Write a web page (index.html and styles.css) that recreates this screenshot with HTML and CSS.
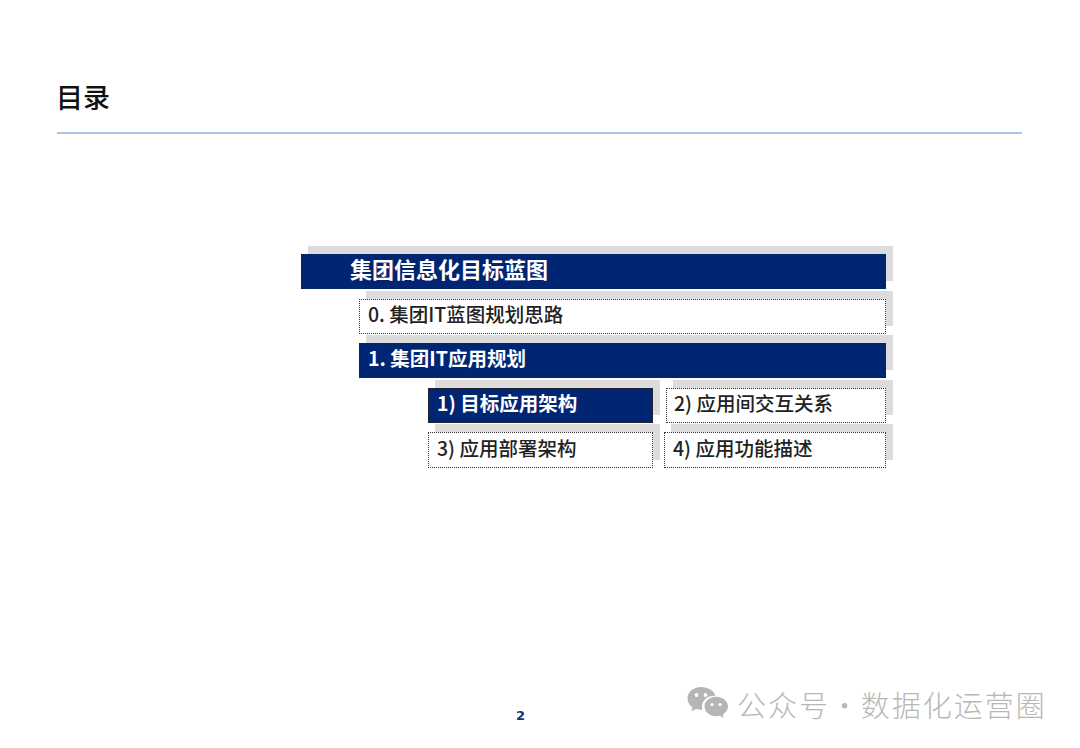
FILE: index.html
```html
<!DOCTYPE html>
<html lang="zh-CN">
<head>
<meta charset="utf-8">
<title>目录</title>
<link rel="stylesheet" href="styles.css">
</head>
<body>
<main class="page">
  <header class="head">
    <h1 class="title">目录</h1>
    <div class="rule"></div>
  </header>
  <section class="menu">
    <div class="item solid lead">集团信息化目标蓝图</div>
    <div class="item outline sub">0. 集团IT蓝图规划思路</div>
    <div class="item solid sub">1. 集团IT应用规划</div>
    <div class="pairs">
      <div class="item solid">1) 目标应用架构</div>
      <div class="item outline nudge">2) 应用间交互关系</div>
      <div class="item outline tall">3) 应用部署架构</div>
      <div class="item outline tall">4) 应用功能描述</div>
    </div>
  </section>
  <footer class="pageno">2</footer>
  <div class="mark">
    <svg class="wechat" viewBox="0 0 42 36" width="42" height="36" aria-hidden="true">
      <path class="bub" d="M14 1C6.500 1 .5 6 .5 12.400c0 3.700 2 6.800 5 8.900L4.300 25.400l4.700-2.400c1.600.4 3.200.7 5 .7.5 0 1 0 1.500-.1-.3-1-.5-2-.5-3.100 0-6 5.600-10.700 12.500-10.700.3 0 .7 0 1 0C27.200 4.900 21.200 1 14 1z"/>
      <circle class="eye" cx="9.500" cy="9" r="1.900"/>
      <circle class="eye" cx="18.500" cy="9" r="1.900"/>
      <path class="bub" d="M41 20.500c0-5.400-5.400-9.700-11.800-9.700-6.500 0-11.700 4.300-11.700 9.700s5.200 9.700 11.700 9.700c1.300 0 2.600-.2 3.800-.5l3.800 2.200-1-3.500c3.200-1.900 5.200-4.600 5.200-7.900z"/>
      <circle class="eye" cx="25" cy="18.500" r="1.600"/>
      <circle class="eye" cx="33" cy="18.500" r="1.600"/>
    </svg>
    <span class="mark-text">公众号 · 数据化运营圈</span>
  </div>
</main>
</body>
</html>
```
FILE: styles.css
```css
* { box-sizing: border-box; }
html, body { margin: 0; background: #fff; }
body { font-family: "Noto Sans CJK SC", "Noto Sans", sans-serif; }
.page {
  position: relative;
  width: 1080px;
  height: 748px;
  overflow: hidden;
  display: flex;
  flex-direction: column;
}
.head { padding: 78px 58px 0 57px; }
.title {
  margin: 0 0 0 -1px;
  font-size: 27px;
  line-height: 38px;
  font-weight: 500;
  color: #111;
}
.rule { height: 2px; margin-top: 16px; background: #aec2e6; }
.menu {
  margin: 120px 194px 0 301px;
  display: flex;
  flex-direction: column;
  gap: 9.500px;
}
.item {
  height: 35px;
  display: flex;
  align-items: center;
  padding: 0 0 5px 8px;
  font-size: 19.500px;
  line-height: 1;
  border: 1px dotted #333;
  box-shadow: 7px -8px 0 #dcdcdc;
}
.solid { background: #002673; color: #fff; font-weight: 700; border-color: #223; }
.outline { background: #fff; color: #222; font-weight: 500; }
.lead { padding: 0 0 8px 48px; font-size: 22px; }
.sub { margin-left: 58px; }
.tall { height: 36px; }
.nudge { margin-left: 2px; padding-left: 7px; }
.pairs {
  margin-left: 127px;
  display: grid;
  grid-template-columns: 225px 222px;
  column-gap: 11px;
  row-gap: 9.500px;
}
.pageno {
  margin-top: auto;
  padding-bottom: 24px;
  padding-left: 516px;
  font-family: "DejaVu Sans", sans-serif;
  font-size: 13px;
  line-height: 16px;
  font-weight: 700;
  color: #12307a;
}
.mark {
  position: absolute;
  left: 687px;
  top: 686px;
  display: flex;
  align-items: center;
  gap: 8px;
  color: #b7b7b7;
}
.bub { fill: #b5b5b5; }
.eye { fill: #fff; }
.mark-text {
  font-size: 29px;
  line-height: 36px;
  font-weight: 300;
  letter-spacing: 2px;
  word-spacing: -8.500px;
  white-space: pre;
}
```
